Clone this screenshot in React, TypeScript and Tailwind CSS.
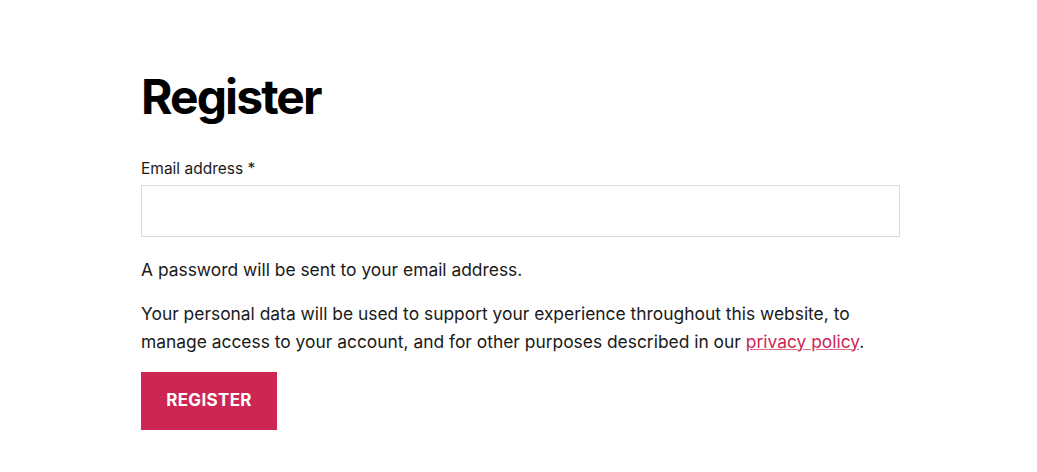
export default function App() {
  return (
    <div className="min-h-screen w-full bg-white font-['Inter',sans-serif] text-[#000]">
      <div className="w-[759px] ml-[141px] pt-[71px]">
        <h2 className="text-[48px] font-bold leading-[1.1] tracking-[-0.04em] text-black">Register</h2>
        <form className="mt-[35px]">
          <label className="block text-[15.5px] leading-[20px] text-[#1a1a1a]">Email address *</label>
          <input
            type="email"
            className="mt-[6px] block h-[52px] w-full border border-[#dcdcdc] bg-white px-4 outline-none"
          />
          <p className="mt-[19px] text-[17.4px] leading-[28px] text-[#1a1a1a]">A password will be sent to your email address.</p>
          <p className="mt-[16px] text-[17.4px] leading-[28px] text-[#1a1a1a]">
            Your personal data will be used to support your experience throughout this website, to manage access to your account, and for other purposes described in our{" "}
            <a href="#" className="text-[#cd2653] underline decoration-[#d8708c]">privacy policy</a>.
          </p>
          <button
            type="button"
            className="mt-[16px] h-[58px] w-[136px] bg-[#cd2653] text-[17px] font-bold uppercase tracking-[0.02em] text-white"
          >
            Register
          </button>
        </form>
      </div>
    </div>
  );
}
